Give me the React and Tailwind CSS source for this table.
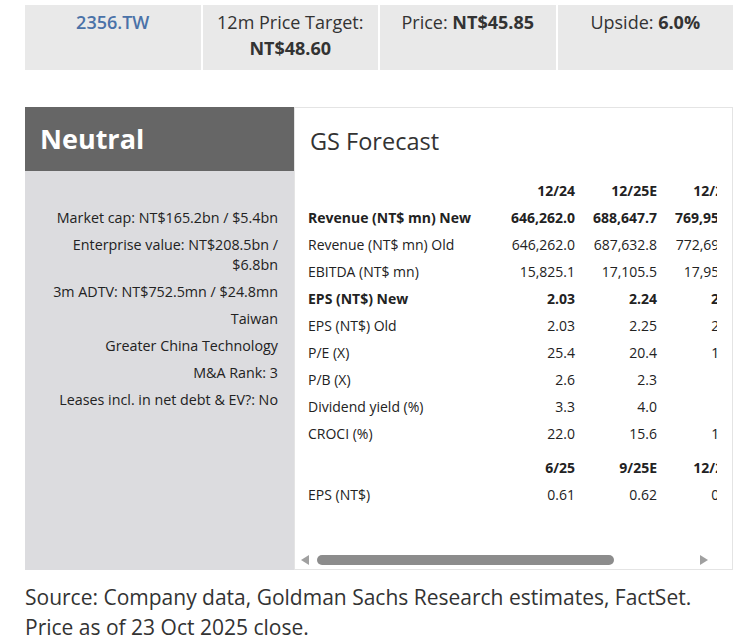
const rows = [
  { label: 'Revenue (NT$ mn) New', bold: true, v: ['646,262.0', '688,647.7', '769,952.4', '842,310.6'] },
  { label: 'Revenue (NT$ mn) Old', v: ['646,262.0', '687,632.8', '772,690.1', '845,127.3'] },
  { label: 'EBITDA (NT$ mn)', v: ['15,825.1', '17,105.5', '17,953.8', '19,402.7'] },
  { label: 'EPS (NT$) New', bold: true, v: ['2.03', '2.24', '2.47', '2.71'] },
  { label: 'EPS (NT$) Old', v: ['2.03', '2.25', '2.49', '2.73'] },
  { label: 'P/E (X)', v: ['25.4', '20.4', '18.6', '16.9'] },
  { label: 'P/B (X)', v: ['2.6', '2.3', '2.2', '2.1'] },
  { label: 'Dividend yield (%)', v: ['3.3', '4.0', '4.4', '4.8'] },
  { label: 'CROCI (%)', v: ['22.0', '15.6', '14.9', '15.8'] },
]

const facts = [
  'Market cap: NT$165.2bn / $5.4bn',
  'Enterprise value: NT$208.5bn / $6.8bn',
  '3m ADTV: NT$752.5mn / $24.8mn',
  'Taiwan',
  'Greater China Technology',
  'M&A Rank: 3',
  'Leases incl. in net debt & EV?: No',
]

function Row({ label, v, bold }) {
  return (
    <div className={`flex h-[27px] items-center text-[14px] ${bold ? 'font-bold' : ''}`}>
      <div className="w-[185px] shrink-0 whitespace-nowrap">{label}</div>
      {v.map((x, i) => (
        <div key={i} className="w-[82px] shrink-0 text-right whitespace-nowrap">{x}</div>
      ))}
    </div>
  )
}

export default function App() {
  return (
    <div className="w-[740px] h-[641px] overflow-hidden bg-white text-[#222]" style={{ fontFamily: '"Open Sans", "Noto Sans", sans-serif' }}>
      <div className="pl-[25px] pr-[7px] pt-[5px]">
        {/* header strip */}
        <div className="grid h-[65px] grid-cols-4 gap-[2px] text-[18px] leading-[26px] text-[#333]">
          <div className="bg-[#e9e9e9] pt-[4px] text-center font-semibold text-[#4a72a8]">2356.TW</div>
          <div className="bg-[#e9e9e9] pt-[4px] text-center">
            12m Price Target:
            <div className="font-bold">NT$48.60</div>
          </div>
          <div className="bg-[#e9e9e9] pt-[4px] text-center">
            Price: <span className="font-bold">NT$45.85</span>
          </div>
          <div className="bg-[#e9e9e9] pt-[4px] text-center">
            Upside: <span className="font-bold">6.0%</span>
          </div>
        </div>

        <div className="mt-[37px] flex h-[463px]">
          {/* rating panel */}
          <div className="flex w-[269px] shrink-0 flex-col">
            <div className="flex h-[64px] items-center bg-[#666666] pl-[15px] text-[27px] font-bold text-white">Neutral</div>
            <div className="flex flex-1 flex-col gap-[7px] bg-[#dcdcdf] pl-[20px] pr-[16px] pt-[37px] text-right text-[14.3px] leading-[20px]">
              {facts.map((f) => (
                <div key={f}>{f}</div>
              ))}
            </div>
          </div>

          {/* forecast panel */}
          <div className="relative min-w-0 flex-1 border border-[#e4e4e4] bg-white">
            <div className="pl-[15px] pt-[17px] text-[23.5px] leading-[32px] text-[#333]">GS Forecast</div>
            <div className="ml-[13px] mr-[15px] mt-[20px] overflow-hidden">
              <div className="w-[513px]">
                <div className="flex h-[27px] items-center text-[14px] font-bold">
                  <div className="w-[185px] shrink-0"></div>
                  {['12/24', '12/25E', '12/26E', '12/27E'].map((h) => (
                    <div key={h} className="w-[82px] shrink-0 text-right">{h}</div>
                  ))}
                </div>
                {rows.map((r) => (
                  <Row key={r.label} {...r} />
                ))}
                <div className="mt-[7px] flex h-[27px] items-center text-[14px] font-bold">
                  <div className="w-[185px] shrink-0"></div>
                  {['6/25', '9/25E', '12/25E', '3/26E'].map((h) => (
                    <div key={h} className="w-[82px] shrink-0 text-right">{h}</div>
                  ))}
                </div>
                <Row label="EPS (NT$)" v={['0.61', '0.62', '0.63', '0.58']} />
              </div>
            </div>

            {/* scrollbar */}
            <div className="absolute bottom-[4px] left-[6px] right-[24px] flex h-[10px] items-center">
              <div className="h-0 w-0 border-y-[5px] border-r-[8px] border-y-transparent border-r-[#a0a0a0]"></div>
              <div className="ml-[8px] h-[10px] w-[297px] rounded-full bg-[#8c8c8c]"></div>
              <div className="ml-auto h-0 w-0 border-y-[5px] border-l-[8px] border-y-transparent border-l-[#a0a0a0]"></div>
            </div>
          </div>
        </div>

        <div className="mt-[12px] text-[21px] leading-[30px] text-[#333]">
          Source: Company data, Goldman Sachs Research estimates, FactSet.
          <br />
          Price as of 23 Oct 2025 close.
        </div>
      </div>
    </div>
  )
}
